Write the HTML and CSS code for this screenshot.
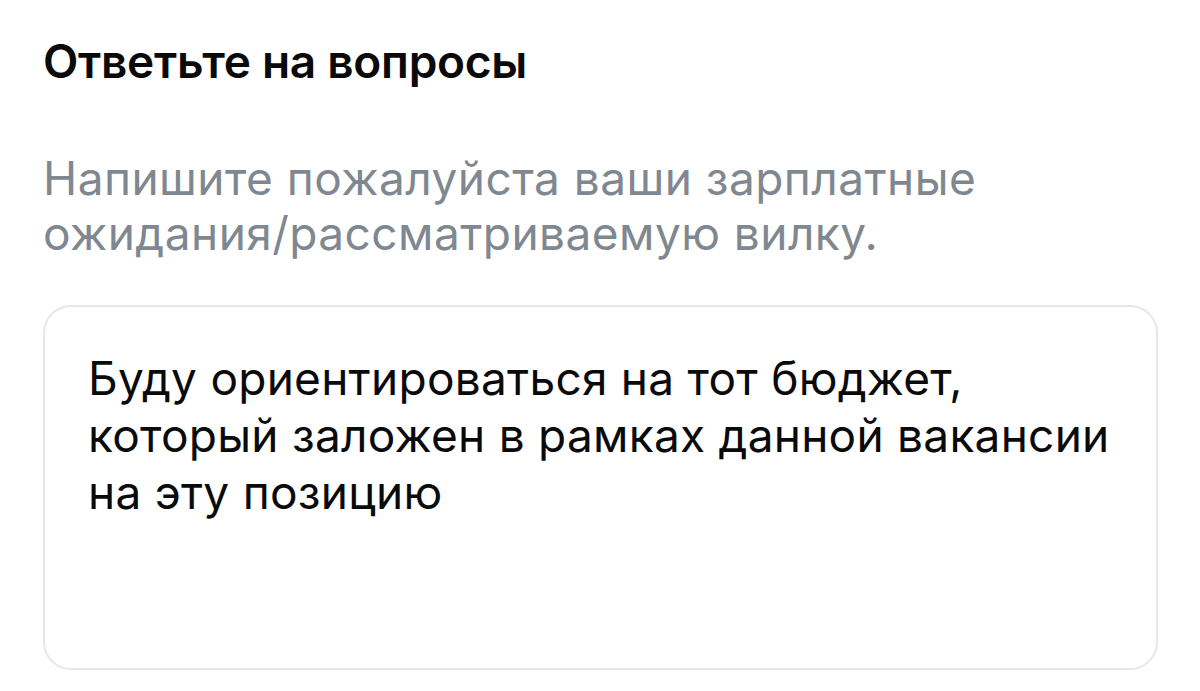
FILE: index.html
```html
<!DOCTYPE html>
<html lang="ru">
<head>
<meta charset="utf-8">
<title>Ответьте на вопросы</title>
<link rel="stylesheet" href="styles.css">
</head>
<body>
<main class="form">
  <h1 class="form-title">Ответьте на вопросы</h1>
  <section class="question">
    <p class="question-label">Напишите пожалуйста ваши зарплатные ожидания/рассматриваемую вилку.</p>
    <div class="answer">
      <p class="answer-text">Буду ориентироваться на тот бюджет, который заложен в рамках данной вакансии на эту позицию</p>
    </div>
  </section>
</main>
</body>
</html>
```

FILE: styles.css
```css
html, body {
  margin: 0;
  padding: 0;
  background: #ffffff;
}

.form {
  font-family: Inter, "Noto Sans", sans-serif;
  font-size: 46px;
  padding: 34px 42px 0 43px;
}

.form-title {
  margin: 0;
  font-size: 46px;
  font-weight: 600;
  line-height: 55px;
  color: #0a0a0b;
  letter-spacing: -0.28px;
}

.question {
  margin-top: 62px;
}

.question-label {
  margin: 0;
  font-size: 46px;
  line-height: 55px;
  font-weight: 400;
  color: #7f8891;
  letter-spacing: 0.45px;
}

.answer {
  margin-top: 44px;
  height: 365px;
  border: 2px solid #e5e7ea;
  border-radius: 28px;
  box-sizing: border-box;
  padding: 43px 34px 0 43px;
}

.answer-text {
  margin: 0;
  font-size: 46px;
  line-height: 57px;
  color: #0a0a0b;
  letter-spacing: 0.25px;
}
```
